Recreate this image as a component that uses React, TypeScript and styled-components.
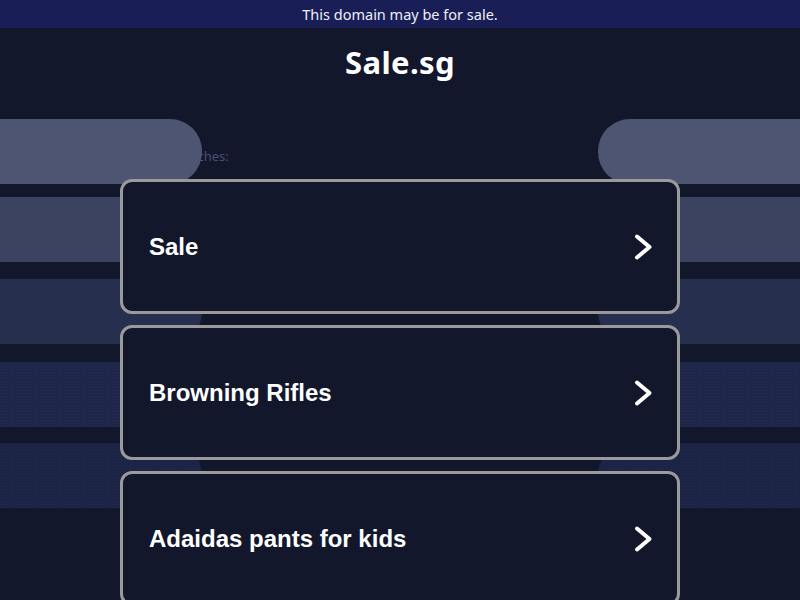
import styled, { createGlobalStyle, css } from "styled-components";

const GlobalStyle = createGlobalStyle`
  html, body {
    margin: 0;
    padding: 0;
    background: #12172b;
    overflow: hidden;
  }
  body {
    font-family: "Noto Sans", "Liberation Sans", sans-serif;
    color: #ffffff;
  }
`;

const Page = styled.div`
  display: flex;
  flex-direction: column;
  min-height: 600px;
  background: #12172b;
`;

const Banner = styled.div`
  height: 28px;
  display: flex;
  align-items: center;
  justify-content: center;
  background: #1a1e56;
  font-family: "Noto Sans", sans-serif;
  font-size: 14.5px;
  color: #eef0f8;
`;

const Header = styled.header`
  height: 91px;
  box-sizing: border-box;
  padding-top: 16px;
  text-align: center;
`;

const Title = styled.h1`
  margin: 0;
  font-family: "Noto Sans", sans-serif;
  font-size: 31px;
  font-weight: 700;
  line-height: 36px;
  letter-spacing: 0.4px;
  color: #ffffff;
`;

// Stage stacks the decorative backdrop and the listing in one grid cell
const Stage = styled.main`
  display: grid;
`;

const Backdrop = styled.div`
  grid-area: 1 / 1;
  z-index: 1;
  display: flex;
  flex-direction: column;
  pointer-events: none;
`;

const BarRow = styled.div<{ $space: number }>`
  display: flex;
  justify-content: space-between;
  height: 65px;
  margin-top: ${(p) => p.$space}px;
`;

const dotted = css`
  background-image: radial-gradient(
    rgba(120, 140, 200, 0.07) 0.6px,
    transparent 0.8px
  );
  background-size: 3px 3px;
`;

const Bar = styled.div<{ $side: "left" | "right"; $tone: string; $dotted?: boolean }>`
  width: 202px;
  height: 100%;
  background-color: ${(p) => p.$tone};
  border-radius: ${(p) => (p.$side === "left" ? "0 32px 32px 0" : "32px 0 0 32px")};
  ${(p) => p.$dotted && dotted}
`;

const Content = styled.div`
  grid-area: 1 / 1;
  display: flex;
  flex-direction: column;
  align-items: center;
`;

const Label = styled.div`
  width: 560px;
  box-sizing: border-box;
  padding: 28px 0 0 2px;
  height: 60px;
  font-family: "Noto Sans", sans-serif;
  font-size: 13px;
  color: #4a5170;
`;

const CardList = styled.div`
  position: relative;
  z-index: 2;
  display: flex;
  flex-direction: column;
  gap: 11px;
`;

const Card = styled.a`
  width: 560px;
  height: 135px;
  box-sizing: border-box;
  display: flex;
  align-items: center;
  justify-content: space-between;
  padding: 0 24px 0 26px;
  border: 3px solid #9a9a9a;
  border-radius: 12px;
  background: #12172b;
  color: #ffffff;
  text-decoration: none;
`;

const CardText = styled.span`
  font-family: "Liberation Sans", Arial, sans-serif;
  font-size: 24px;
  font-weight: 700;
`;

const Chevron = () => (
  <svg width="20" height="28" viewBox="0 0 20 28" fill="none">
    <polyline
      points="4,3.5 16.5,14 4,24.5"
      stroke="#ffffff"
      strokeWidth="4"
      strokeLinecap="round"
      strokeLinejoin="round"
    />
  </svg>
);

// space = gap above each pair of bars
const bars = [
  { tone: "#4e5573", space: 0 },
  { tone: "#3c4361", space: 13 },
  { tone: "#272f4e", space: 17 },
  { tone: "#1e2649", space: 18, dotted: true },
  { tone: "#1c2446", space: 16, dotted: true },
];

const links = ["Sale", "Browning Rifles", "Adaidas pants for kids"];

export default function App() {
  return (
    <>
      <GlobalStyle />
      <Page>
        <Banner>This domain may be for sale.</Banner>
        <Header>
          <Title>Sale.sg</Title>
        </Header>
        <Stage>
          <Content>
            <Label>Related searches:</Label>
            <CardList>
              {links.map((text) => (
                <Card key={text} href="#">
                  <CardText>{text}</CardText>
                  <Chevron />
                </Card>
              ))}
            </CardList>
          </Content>
          <Backdrop>
            {bars.map((b, i) => (
              <BarRow key={i} $space={b.space}>
                <Bar $side="left" $tone={b.tone} $dotted={b.dotted} />
                <Bar $side="right" $tone={b.tone} $dotted={b.dotted} />
              </BarRow>
            ))}
          </Backdrop>
        </Stage>
      </Page>
    </>
  );
}
